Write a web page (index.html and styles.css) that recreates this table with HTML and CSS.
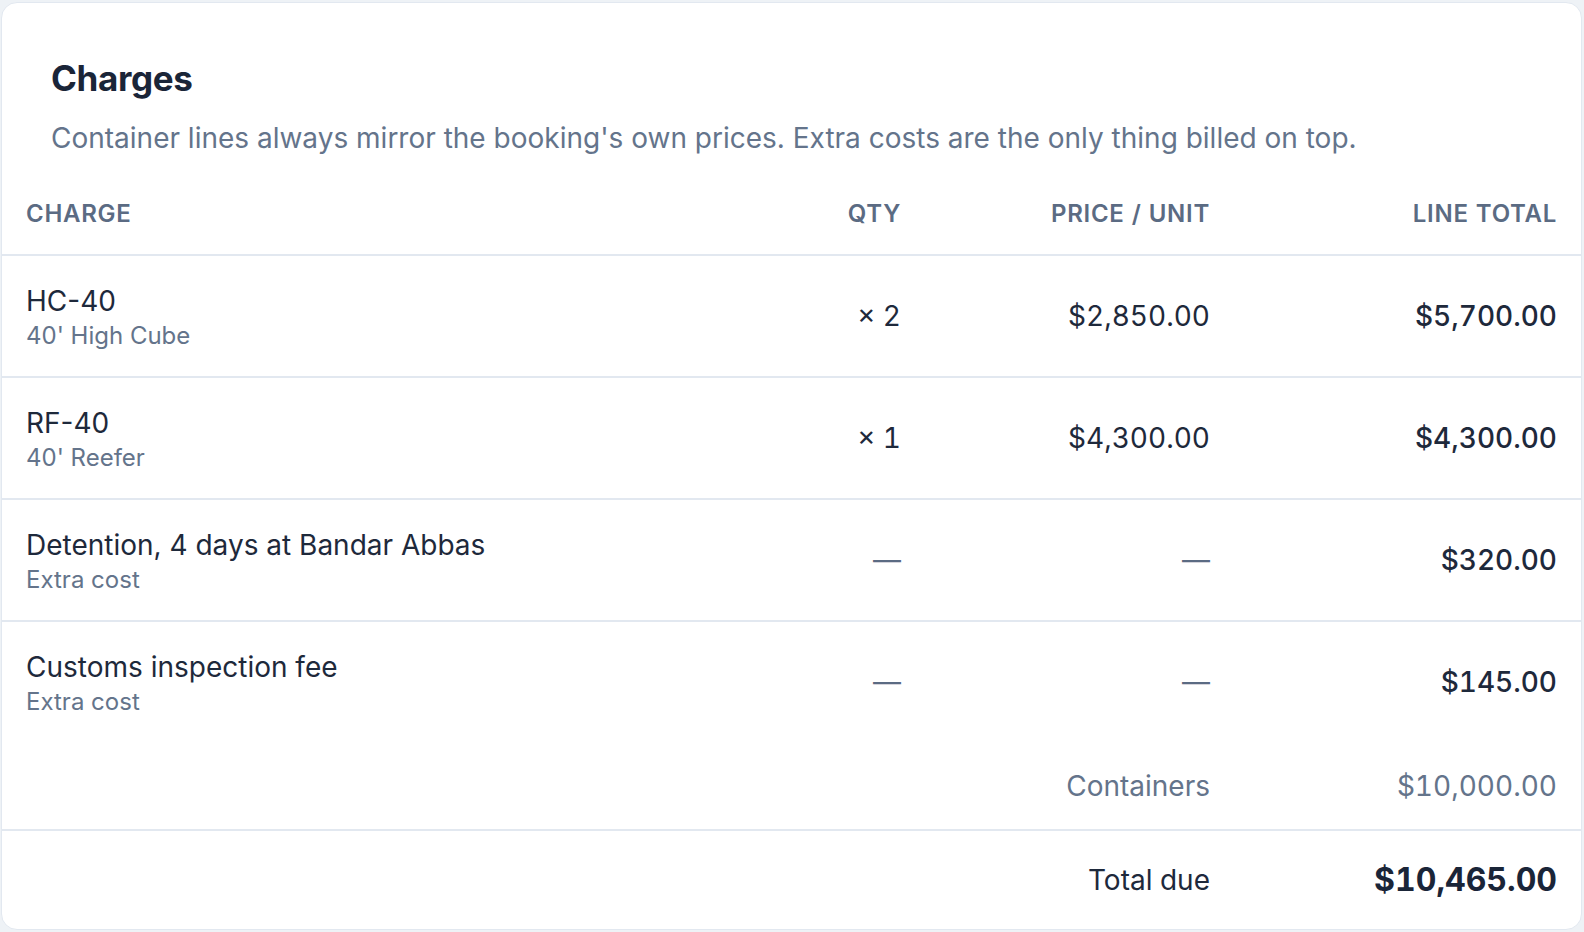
FILE: index.html
```html
<!DOCTYPE html>
<html lang="en">
<head>
<meta charset="utf-8">
<title>Charges</title>
<link rel="stylesheet" href="styles.css">
</head>
<body>
<section class="card">
  <header class="card-head">
    <h2 class="title">Charges</h2>
    <p class="subtitle">Container lines always mirror the booking's own prices. Extra costs are the only thing billed on top.</p>
  </header>
  <table class="charges">
    <thead>
      <tr>
        <th class="col-charge">Charge</th>
        <th class="col-qty num">Qty</th>
        <th class="col-price num">Price / unit</th>
        <th class="col-total num">Line total</th>
      </tr>
    </thead>
    <tbody>
      <tr class="line">
        <td><div class="name">HC-40</div><div class="sub">40' High Cube</div></td>
        <td class="num">× 2</td>
        <td class="num">$2,850.00</td>
        <td class="num strong">$5,700.00</td>
      </tr>
      <tr class="line">
        <td><div class="name">RF-40</div><div class="sub">40' Reefer</div></td>
        <td class="num">× 1</td>
        <td class="num">$4,300.00</td>
        <td class="num strong">$4,300.00</td>
      </tr>
      <tr class="line">
        <td><div class="name">Detention, 4 days at Bandar Abbas</div><div class="sub">Extra cost</div></td>
        <td class="num muted-dash">—</td>
        <td class="num muted-dash">—</td>
        <td class="num strong">$320.00</td>
      </tr>
      <tr class="line last">
        <td><div class="name">Customs inspection fee</div><div class="sub">Extra cost</div></td>
        <td class="num muted-dash">—</td>
        <td class="num muted-dash">—</td>
        <td class="num strong">$145.00</td>
      </tr>
    </tbody>
    <tfoot>
      <tr class="subtotal">
        <td></td>
        <td></td>
        <td class="num">Containers</td>
        <td class="num">$10,000.00</td>
      </tr>
      <tr class="grand">
        <td></td>
        <td></td>
        <td class="num label">Total due</td>
        <td class="num amount">$10,465.00</td>
      </tr>
    </tfoot>
  </table>
</section>
</body>
</html>
```

FILE: styles.css
```css
* { box-sizing: border-box; }

html, body {
  margin: 0;
  padding: 0;
}

body {
  background: #eef2f6;
  padding: 2px 2px 2px 1px;
  font-family: Inter, "Noto Sans", "Liberation Sans", sans-serif;
  color: #1e293b;
}

.card {
  background: #ffffff;
  border: 1px solid #e2e8f0;
  border-radius: 16px;
  height: 928px;
  overflow: hidden;
}

.card-head {
  padding: 53px 48px 17px 49px;
}

.title {
  margin: 0;
  font-size: 35px;
  line-height: 44px;
  font-weight: 700;
  letter-spacing: -0.01em;
  color: #1a2538;
}

.subtitle {
  margin: 20px 0 0;
  font-size: 28px;
  line-height: 36px;
  color: #64748b;
}

.charges {
  width: 100%;
  border-collapse: collapse;
  table-layout: fixed;
}

.col-qty { width: 200px; }
.col-price { width: 309px; }
.col-total { width: 347px; }

.charges th {
  padding: 24px 24px 23px;
  font-size: 24px;
  line-height: 34px;
  font-weight: 600;
  text-transform: uppercase;
  letter-spacing: 0.03em;
  color: #5b6b83;
  text-align: left;
  border-bottom: 2px solid #e2e8f0;
}

.charges th.num { text-align: right; }

.charges td {
  padding: 0 24px;
  vertical-align: middle;
}

.num {
  text-align: right;
  white-space: nowrap;
  font-variant-numeric: tabular-nums;
}

.line td {
  height: 120px;
  padding-top: 27px;
  padding-bottom: 23px;
  font-size: 28px;
  line-height: 36px;
  border-bottom: 2px solid #e2e8f0;
}

.line td.num {
  padding-top: 25px;
  padding-bottom: 25px;
}

.line.last td { border-bottom: none; }

.name {
  font-size: 28px;
  line-height: 36px;
  color: #1e293b;
}

.sub {
  font-size: 24px;
  line-height: 34px;
  color: #64748b;
}

.strong { font-weight: 500; }

.muted-dash { color: #5b6b83; }

.subtotal td {
  height: 88px;
  font-size: 28px;
  line-height: 36px;
  color: #64748b;
  border-bottom: 2px solid #e2e8f0;
}

.grand td {
  height: 95px;
  padding-top: 4px;
}

.grand .label {
  font-size: 28px;
  line-height: 36px;
  color: #1e293b;
}

.grand .amount {
  font-size: 32px;
  line-height: 40px;
  font-weight: 700;
  color: #1a2538;
}
```
